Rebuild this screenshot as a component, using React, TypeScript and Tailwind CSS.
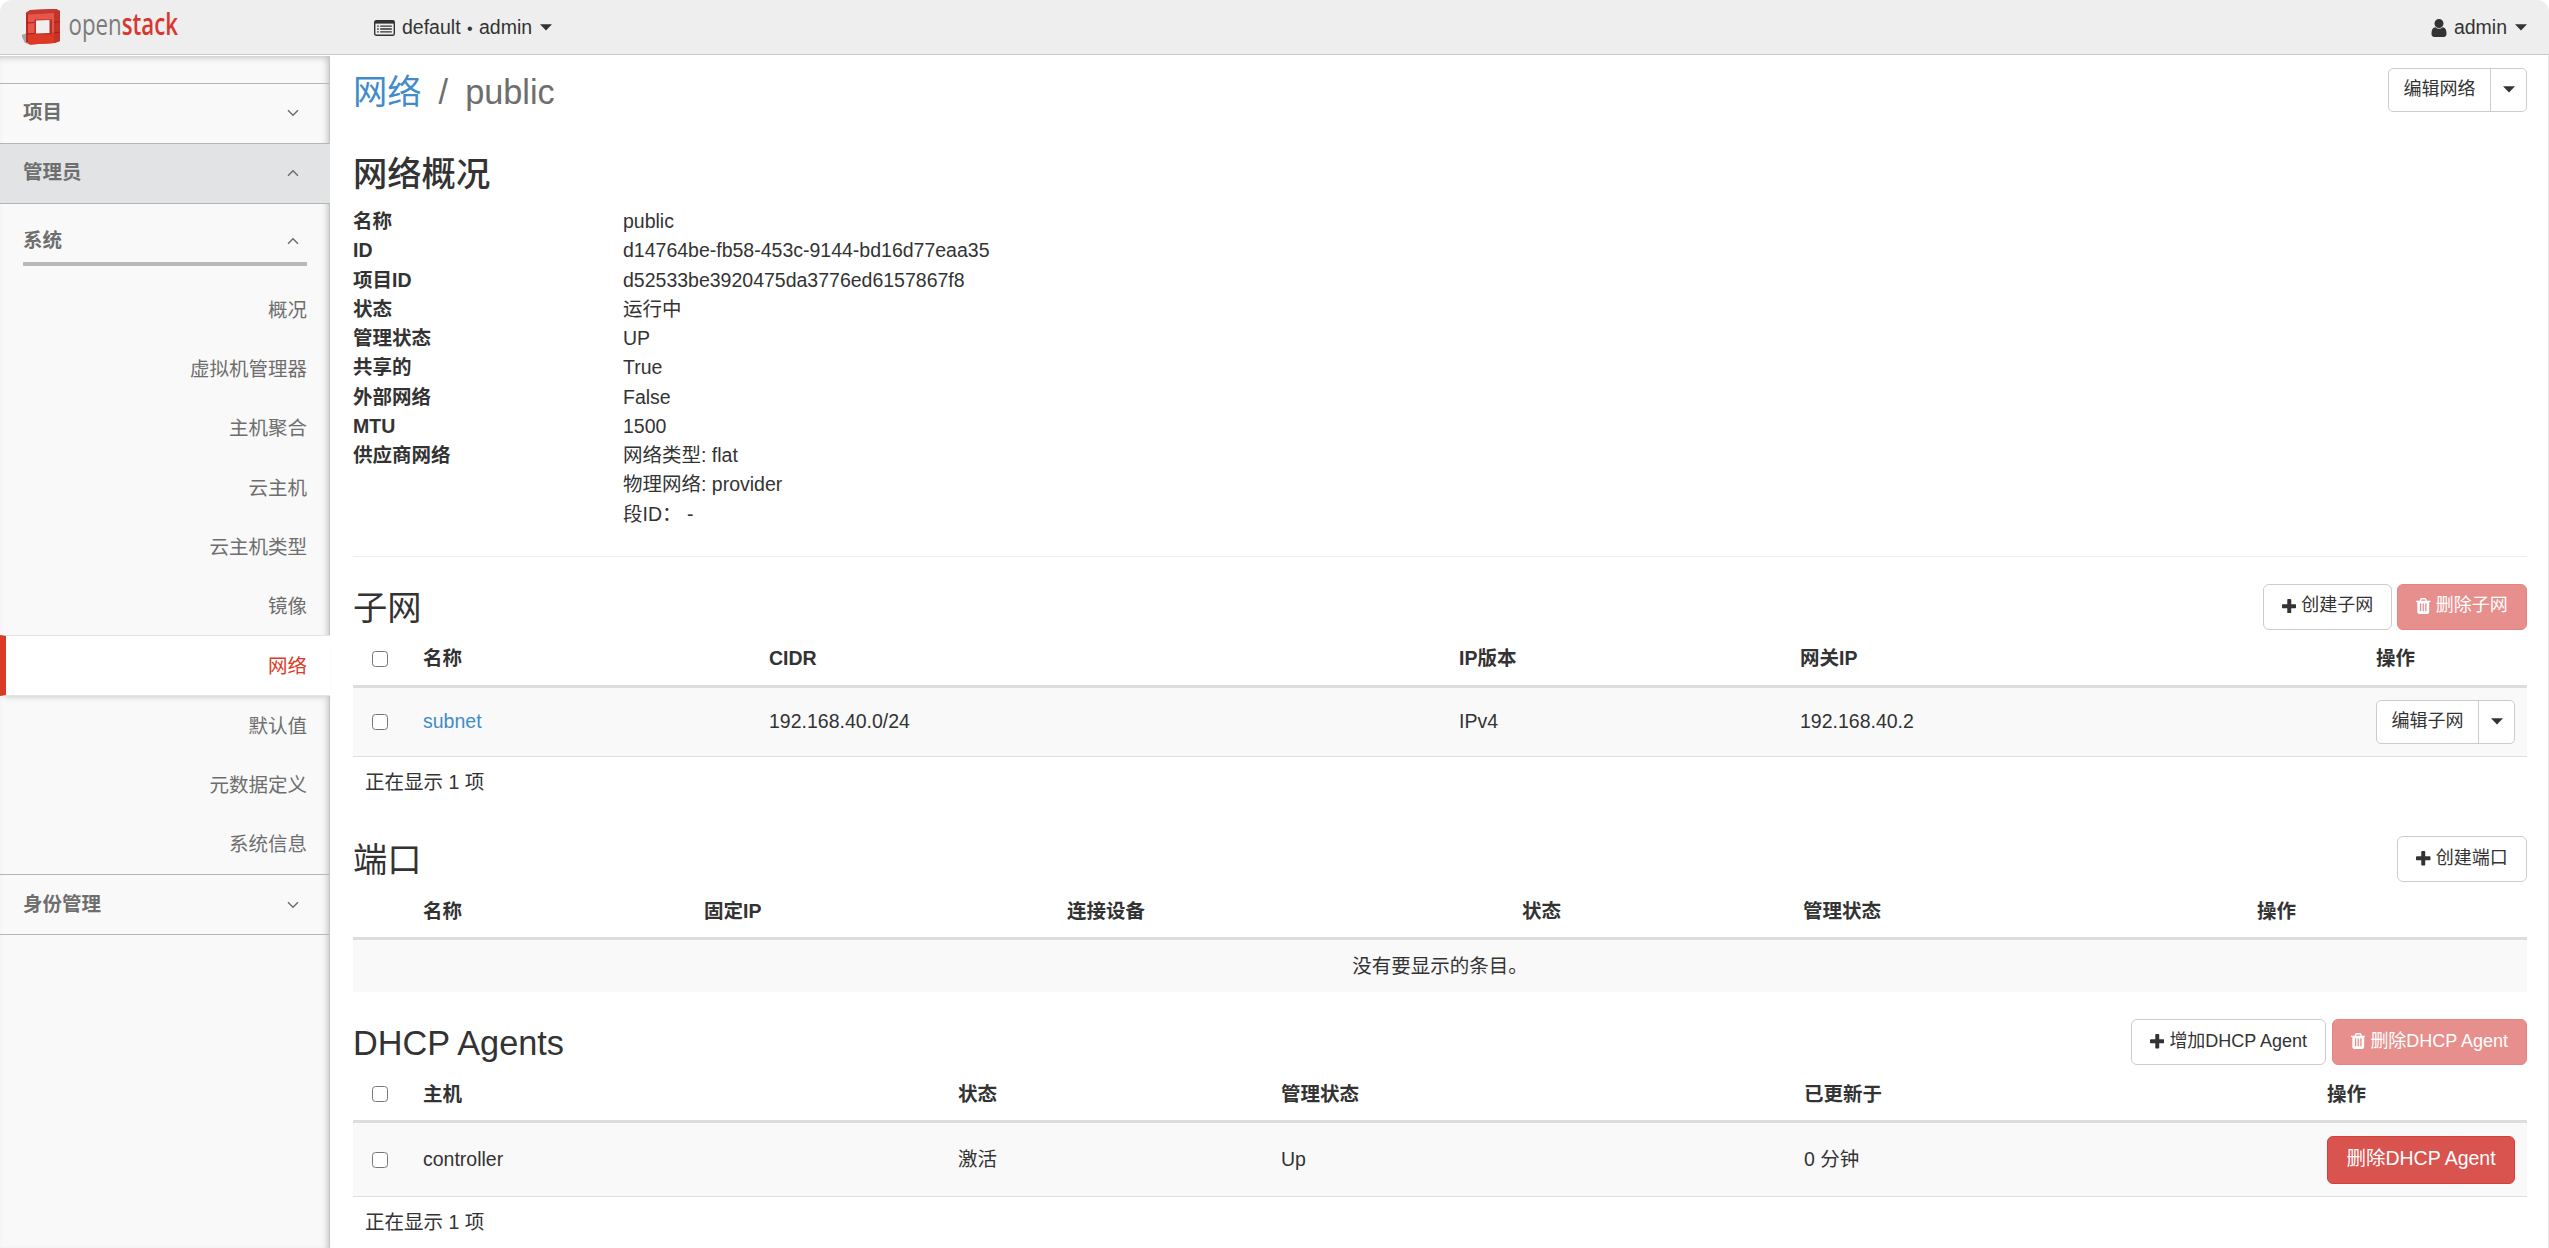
import React from 'react';

interface Column {
  label: string;
  width: number;
}

interface NavItem {
  label: string;
  active?: boolean;
}

const navItems: NavItem[] = [
  { label: '概况' },
  { label: '虚拟机管理器' },
  { label: '主机聚合' },
  { label: '云主机' },
  { label: '云主机类型' },
  { label: '镜像' },
  { label: '网络', active: true },
  { label: '默认值' },
  { label: '元数据定义' },
  { label: '系统信息' },
];

const details: [string, string][] = [
  ['名称', 'public'],
  ['ID', 'd14764be-fb58-453c-9144-bd16d77eaa35'],
  ['项目ID', 'd52533be3920475da3776ed6157867f8'],
  ['状态', '运行中'],
  ['管理状态', 'UP'],
  ['共享的', 'True'],
  ['外部网络', 'False'],
  ['MTU', '1500'],
  ['供应商网络', '网络类型: flat'],
  ['', '物理网络: provider'],
  ['', '段ID： -'],
];

const subnetColumns: Column[] = [
  { label: '', width: 58 },
  { label: '名称', width: 346 },
  { label: 'CIDR', width: 690 },
  { label: 'IP版本', width: 341 },
  { label: '网关IP', width: 576 },
  { label: '操作', width: 163 },
];

const portColumns: Column[] = [
  { label: '', width: 58 },
  { label: '名称', width: 281 },
  { label: '固定IP', width: 363 },
  { label: '连接设备', width: 455 },
  { label: '状态', width: 281 },
  { label: '管理状态', width: 454 },
  { label: '操作', width: 282 },
];

const agentColumns: Column[] = [
  { label: '', width: 58 },
  { label: '主机', width: 535 },
  { label: '状态', width: 323 },
  { label: '管理状态', width: 523 },
  { label: '已更新于', width: 523 },
  { label: '操作', width: 212 },
];

const PlusIcon = () => (
  <svg viewBox="192 128 1408 1408" className="w-[14.5px] h-[14.5px] shrink-0" fill="currentColor">
    <path d="M1600 736v192q0 40-28 68t-68 28h-416v416q0 40-28 68t-68 28h-192q-40 0-68-28t-28-68v-416h-416q-40 0-68-28t-28-68v-192q0-40 28-68t68-28h416v-416q0-40 28-68t68-28h192q40 0 68 28t28 68v416h416q40 0 68 28t28 68z" />
  </svg>
);

const TrashIcon = () => (
  <svg viewBox="192 128 1408 1536" className="w-[14.5px] h-[16px] shrink-0" fill="currentColor">
    <path d="M704 1376v-704q0-14-9-23t-23-9h-64q-14 0-23 9t-9 23v704q0 14 9 23t23 9h64q14 0 23-9t9-23zm256 0v-704q0-14-9-23t-23-9h-64q-14 0-23 9t-9 23v704q0 14 9 23t23 9h64q14 0 23-9t9-23zm256 0v-704q0-14-9-23t-23-9h-64q-14 0-23 9t-9 23v704q0 14 9 23t23 9h64q14 0 23-9t9-23zm-544-992h448l-48-117q-7-9-17-11h-317q-10 2-17 11zm928 32v64q0 14-9 23t-23 9h-96v948q0 83-47 143.5t-113 60.5h-832q-66 0-113-58.5t-47-141.5v-952h-96q-14 0-23-9t-9-23v-64q0-14 9-23t23-9h309l70-167q15-37 54-63t79-26h320q40 0 79 26t54 63l70 167h309q14 0 23 9t9 23z" />
  </svg>
);

const UserIcon = () => (
  <svg viewBox="256 128 1280 1536" className="w-4 h-[18px]" fill="currentColor">
    <path d="M1536 1399q0 109-62.5 187t-150.5 78h-854q-88 0-150.5-78t-62.5-187q0-85 8.5-160.5t31.5-152 58.5-131 94-89 134.5-34.5q131 128 313 128t313-128q76 0 134.5 34.5t94 89 58.5 131 31.5 152 8.5 160.5zm-256-887q0 159-112.5 271.5t-271.5 112.5-271.5-112.5-112.5-271.5 112.5-271.5 271.5-112.5 271.5 112.5 112.5 271.5z" />
  </svg>
);

const ListIcon = () => (
  <svg viewBox="0 0 21 16" className="w-[21px] h-4" fill="none" stroke="currentColor">
    <rect x="0.7" y="0.7" width="19.6" height="14.6" rx="1.6" strokeWidth="1.4" />
    <path d="M1 2.2h19" strokeWidth="2.8" />
    <path d="M3.2 6.200h1.600M3.200 9h1.600M3.200 11.800h1.600M6.200 6.200h11.600M6.200 9h11.600M6.200 11.800h11.600" strokeWidth="1.3" />
  </svg>
);

const Caret = ({ className = '' }: { className?: string }) => (
  <svg viewBox="0 0 12 7" className={`w-3 h-[7px] shrink-0 ${className}`} fill="currentColor">
    <path d="M0 0.200h12L6 6.500z" />
  </svg>
);

const Chevron = ({ up = false }: { up?: boolean }) => (
  <svg viewBox="0 0 12 8" className="w-3 h-2" fill="none" stroke="#6e6e6e" strokeWidth="1.5">
    <path d={up ? 'M1 6.8l5-5 5 5' : 'M1 1.2l5 5 5-5'} />
  </svg>
);

const Logo = () => (
  <svg width="164" height="52" viewBox="0 -6 164 52">
    <path d="M-1 28l6-2v10l2 1-4-1z" fill="#a5a5a5" />
    <path d="M4 6l4-3 26-1 4 2v30l-5 2-25 1.500-4-2.500z" fill="#b8291f" />
    <path d="M6 7l26-1.500v30.500L8 37.500l-2-1z" fill="#e8554b" />
    <path d="M4 5.500l5-2.500 25-1 4 2-5 2-26 1.500z" fill="#c23a30" />
    <path d="M6 26.500l26-1v10.500L8 37.500l-2-1z" fill="#dc3a26" />
    <path d="M32 6l6-2v30l-6 2z" fill="#c0342a" />
    <path d="M5 16l7-.5M5 27l7-.5M32 15.500l6-1M32 26l6-1" stroke="#9c2219" />
    <path d="M12.500 12.500h17.500v15h-17.500z" fill="#b52f25" />
    <path d="M14 13.500l13.500-.5v13l-13.500.5z" fill="#f1eeee" />
    <g transform="translate(46.500 28) scale(0.742 1)">
      <text x="0" y="0" fontFamily="'Open Sans', sans-serif" fontSize="30" fontWeight="500" fill="#7b7b7b">
        open
        <tspan fontWeight="600" fill="#d8382f">stack</tspan>
      </text>
    </g>
  </svg>
);

const Checkbox = () => (
  <div className="w-4 h-4 ml-[7px] rounded-[3.500px] border-[1.500px] border-[#767676] bg-white" />
);

interface ActionButtonProps {
  icon: React.ReactNode;
  danger?: boolean;
  children: React.ReactNode;
  className: string;
}

const ActionButton = ({ icon, danger, children, className }: ActionButtonProps) => (
  <button
    className={`h-[46px] pb-0.5 rounded-md border flex items-center justify-center gap-[5px] text-[18px] whitespace-nowrap ${
      danger ? 'bg-[#e78f8c] border-[#e58482] text-white' : 'bg-white border-[#ccc]'
    } ${className}`}
  >
    {icon}
    <span>{children}</span>
  </button>
);

const SplitButton = ({ children }: { children: React.ReactNode }) => (
  <div className="flex w-[139px] h-11 rounded-[5px] border border-[#ccc] bg-white text-[18px]">
    <button className="w-[102px] pb-px border-r border-[#ccc] whitespace-nowrap">{children}</button>
    <button className="flex-1 flex items-center justify-center pb-px">
      <Caret />
    </button>
  </div>
);

interface DataTableProps {
  columns: Column[];
  selectable?: boolean;
  children: React.ReactNode;
}

const DataTable = ({ columns, selectable, children }: DataTableProps) => (
  <table className="w-[2174px] table-fixed border-collapse text-left">
    <colgroup>
      {columns.map((c, i) => (
        <col key={i} style={{ width: c.width }} />
      ))}
    </colgroup>
    <thead>
      <tr className="h-[58px] shadow-[inset_0_-3px_0_#ddd]">
        {columns.map((c, i) => (
          <th key={i} className="px-3 font-bold">
            {c.label || (selectable && <Checkbox />)}
          </th>
        ))}
      </tr>
    </thead>
    <tbody>{children}</tbody>
  </table>
);

const Sidebar = () => (
  <aside className="w-[330px] shrink-0 bg-[#f9f9f9] text-[#6e6e6e] border-r border-[#c4c4c4] shadow-[inset_-3px_3px_7px_-2px_rgba(0,0,0,0.25)]">
    <div className="h-7 border-b border-[#b5b5b5]" />
    <div className="h-[60px] pl-[23px] pr-[30px] pb-px flex items-center justify-between border-b border-[#b5b5b5] font-bold">
      项目
      <Chevron />
    </div>
    <div className="w-[330px] h-[60px] pl-[23px] pr-[31px] pb-px flex items-center justify-between border-b border-[#b5b5b5] bg-[#e1e3e5] font-bold">
      管理员
      <Chevron up />
    </div>
    <div className="ml-[23px] mr-[22px] mt-2.5 h-[52px] pr-2 pt-1.5 flex items-center justify-between border-b-4 border-[#b9b9b9] font-bold">
      系统
      <Chevron up />
    </div>
    <ul className="mt-[14px] text-right">
      {navItems.map(item =>
        item.active ? (
          <li
            key={item.label}
            className="w-[330px] h-[61px] pr-[23px] pt-0.5 flex items-center justify-end bg-white border-y border-y-[#e3e3e3] border-l-[6px] border-l-[#da3b26] text-[#da3b26] shadow-[0_5px_6px_-4px_rgba(0,0,0,0.18)]"
          >
            {item.label}
          </li>
        ) : (
          <li key={item.label} className="h-[59.200px] pr-[22px] pt-0.5 flex items-center justify-end">
            {item.label}
          </li>
        )
      )}
    </ul>
    <div className="h-[61px] pl-[23px] pr-[30px] pt-px flex items-center justify-between border-y border-[#b5b5b5] font-bold">
      身份管理
      <Chevron />
    </div>
  </aside>
);

const App: React.FC = () => {
  return (
    <div className="w-[2549px] h-[1248px] overflow-hidden flex flex-col bg-white text-[#333] text-[19.500px] leading-[29.250px] font-['Liberation_Sans','Noto_Sans_CJK_SC',sans-serif]">
      <header className="h-[55px] shrink-0 flex items-center bg-[#eee] border-b border-[#c8c8c8] rounded-t-xl pl-[22px] pr-[22px]">
        <Logo />
        <div className="flex items-center ml-[188px] pt-px">
          <ListIcon />
          <span className="ml-[7px]">
            default <span className="text-base mx-px">•</span> admin
          </span>
          <Caret className="ml-2" />
        </div>
        <div className="flex items-center ml-auto pt-px">
          <UserIcon />
          <span className="ml-[7px]">admin</span>
          <Caret className="ml-2" />
        </div>
      </header>

      <div className="flex flex-1 min-h-0 pt-px border-r border-[#e8e8e8]">
        <Sidebar />

        <main className="flex-1 pl-[23px] pr-[21px]">
          <div className="h-[72px] pt-3 flex justify-between items-start">
            <h1 className="flex h-12 pt-px items-center text-[34.300px] text-[#6e6e6e]">
              <a className="text-[#428bca]">网络</a>
              <span className="ml-[17px]">/</span>
              <span className="ml-[17px]">public</span>
            </h1>
            <SplitButton>编辑网络</SplitButton>
          </div>

          <h2 className="mt-[23px] h-12 flex items-center text-[34.300px] font-medium">网络概况</h2>
          <dl className="mt-2">
            {details.map(([term, value], i) => (
              <div key={i} className="flex h-[29.250px]">
                <dt className="w-[270px] font-bold">{term}</dt>
                <dd>{value}</dd>
              </div>
            ))}
          </dl>
          <hr className="mt-[27px] border-[#eee]" />

          <section className="pt-[27px]">
            <div className="h-[46px] flex items-center">
              <h2 className="pt-[3px] text-[34.300px]">子网</h2>
              <ActionButton icon={<PlusIcon />} className="ml-auto w-[129px]">创建子网</ActionButton>
              <ActionButton icon={<TrashIcon />} danger className="ml-[5px] w-[130px]">删除子网</ActionButton>
            </div>
            <DataTable columns={subnetColumns} selectable>
              <tr className="h-[69px] bg-[#f9f9f9] border-b border-[#ddd]">
                <td className="px-3"><Checkbox /></td>
                <td className="px-3 text-[#428bca]">subnet</td>
                <td className="px-3">192.168.40.0/24</td>
                <td className="px-3">IPv4</td>
                <td className="px-3">192.168.40.2</td>
                <td className="px-3"><SplitButton>编辑子网</SplitButton></td>
              </tr>
            </DataTable>
            <p className="h-[53px] pl-3 pt-[11px]">正在显示 1 项</p>
          </section>

          <section className="pt-[26px]">
            <div className="h-[46px] flex items-center">
              <h2 className="pt-[3px] text-[34.300px]">端口</h2>
              <ActionButton icon={<PlusIcon />} className="ml-auto w-[130px]">创建端口</ActionButton>
            </div>
            <DataTable columns={portColumns}>
              <tr className="h-[52px] bg-[#f9f9f9]">
                <td colSpan={7} className="text-center">没有要显示的条目。</td>
              </tr>
            </DataTable>
          </section>

          <section className="pt-[27px]">
            <div className="h-[46px] flex items-center">
              <h2 className="pt-[3px] text-[34.300px]">DHCP Agents</h2>
              <ActionButton icon={<PlusIcon />} className="ml-auto w-[195px]">增加DHCP Agent</ActionButton>
              <ActionButton icon={<TrashIcon />} danger className="ml-1.5 w-[195px]">删除DHCP Agent</ActionButton>
            </div>
            <DataTable columns={agentColumns} selectable>
              <tr className="h-[73px] bg-[#f9f9f9] border-b border-[#ddd]">
                <td className="px-3"><Checkbox /></td>
                <td className="px-3">controller</td>
                <td className="px-3">激活</td>
                <td className="px-3">Up</td>
                <td className="px-3">0 分钟</td>
                <td className="px-3">
                  <button className="w-[188px] h-12 pb-px rounded-md border border-[#d43f3a] bg-[#d9534f] text-white whitespace-nowrap">
                    删除DHCP Agent
                  </button>
                </td>
              </tr>
            </DataTable>
            <p className="h-[53px] pl-3 pt-[11px]">正在显示 1 项</p>
          </section>
        </main>
      </div>
    </div>
  );
};

export default App;
